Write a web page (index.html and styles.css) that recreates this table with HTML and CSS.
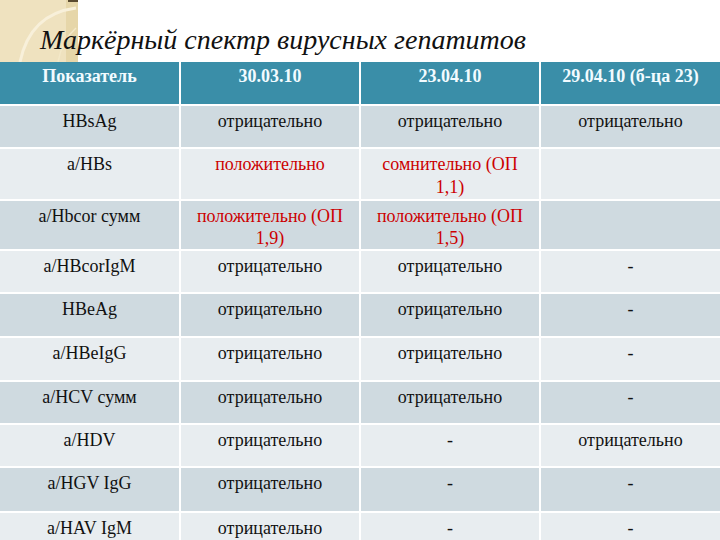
FILE: index.html
```html
<!DOCTYPE html>
<html lang="ru">
<head>
<meta charset="utf-8">
<title>Маркёрный спектр вирусных гепатитов</title>
<link rel="stylesheet" href="styles.css">
</head>
<body>
<div class="slide">
  <div class="deco">
    <svg width="78" height="62" viewBox="0 0 78 62">
      <rect x="0" y="0" width="78" height="62" fill="#efe2bf"/>
      <rect x="66" y="0" width="12" height="62" fill="#e6d6a9"/>
      <path d="M20 62 Q30 14 76 8" fill="none" stroke="#f8f0da" stroke-width="3"/>
      <path d="M58 62 Q62 40 76 28" fill="none" stroke="#f3e8c8" stroke-width="1.5"/>
      <rect x="68" y="0" width="10" height="2" fill="#5a4a30"/>
    </svg>
  </div>
  <h1 class="title">Маркёрный спектр вирусных гепатитов</h1>
  <table class="grid">
    <thead>
      <tr class="head">
        <th>Показатель</th><th>30.03.10</th><th>23.04.10</th><th>29.04.10 (б-ца 23)</th>
      </tr>
    </thead>
    <tbody>
      <tr class="dark h43"><td>HBsAg</td><td>отрицательно</td><td>отрицательно</td><td>отрицательно</td></tr>
      <tr class="light h51"><td>a/HBs</td><td class="red">положительно</td><td class="red">сомнительно (ОП 1,1)</td><td></td></tr>
      <tr class="dark h47 tight"><td>a/Hbcor сумм</td><td class="red">положительно (ОП 1,9)</td><td class="red">положительно (ОП 1,5)</td><td></td></tr>
      <tr class="light h43"><td>a/HBcorIgM</td><td>отрицательно</td><td>отрицательно</td><td>-</td></tr>
      <tr class="dark h44"><td>HBeAg</td><td>отрицательно</td><td>отрицательно</td><td>-</td></tr>
      <tr class="light h44"><td>a/HBeIgG</td><td>отрицательно</td><td>отрицательно</td><td>-</td></tr>
      <tr class="dark h43"><td>a/HCV сумм</td><td>отрицательно</td><td>отрицательно</td><td>-</td></tr>
      <tr class="light h43"><td>a/HDV</td><td>отрицательно</td><td>-</td><td>отрицательно</td></tr>
      <tr class="dark h45"><td>a/HGV IgG</td><td>отрицательно</td><td>-</td><td>-</td></tr>
      <tr class="light h43"><td>a/HAV IgM</td><td>отрицательно</td><td>-</td><td>-</td></tr>
    </tbody>
  </table>
</div>
</body>
</html>
```
FILE: styles.css
```css
html, body {
  margin: 0;
  padding: 0;
  background: #ffffff;
}
.slide {
  position: relative;
  width: 720px;
  height: 540px;
  overflow: hidden;
  font-family: "Liberation Serif", "DejaVu Serif", serif;
}
.deco {
  position: absolute;
  left: 0;
  top: 0;
  width: 78px;
  height: 62px;
  z-index: 0;
}
.deco svg {
  display: block;
}
.title {
  position: relative;
  z-index: 1;
  margin: 0;
  height: 62px;
  box-sizing: border-box;
  padding: 24px 0 0 40px;
  font-family: "Liberation Serif", "DejaVu Serif", serif;
  font-style: italic;
  font-weight: normal;
  font-size: 28px;
  line-height: 32px;
  color: #111111;
  white-space: nowrap;
}
.grid {
  width: 720px;
  border-collapse: collapse;
  border-style: hidden;
  table-layout: fixed;
}
.grid th, .grid td {
  width: 25%;
  border: 2px solid #ffffff;
  text-align: center;
  vertical-align: top;
  font-family: "Liberation Serif", "DejaVu Serif", serif;
  font-size: 18px;
  line-height: 23px;
  padding: 4px 10px 0;
  box-sizing: border-box;
}
.head th {
  background: #3a8ea8;
  color: #f2fbff;
  font-weight: bold;
  height: 43px;
  padding-top: 3px;
}
.dark td {
  background: #cfdae0;
  color: #111111;
}
.light td {
  background: #e8edf0;
  color: #111111;
}
.grid td.red {
  color: #cc0000;
}
.grid .tight td {
  line-height: 22px;
}
.h43 td { height: 43px; }
.h44 td { height: 44px; }
.h45 td { height: 45px; }
.h47 td { height: 47px; }
.h51 td { height: 51px; }
```
